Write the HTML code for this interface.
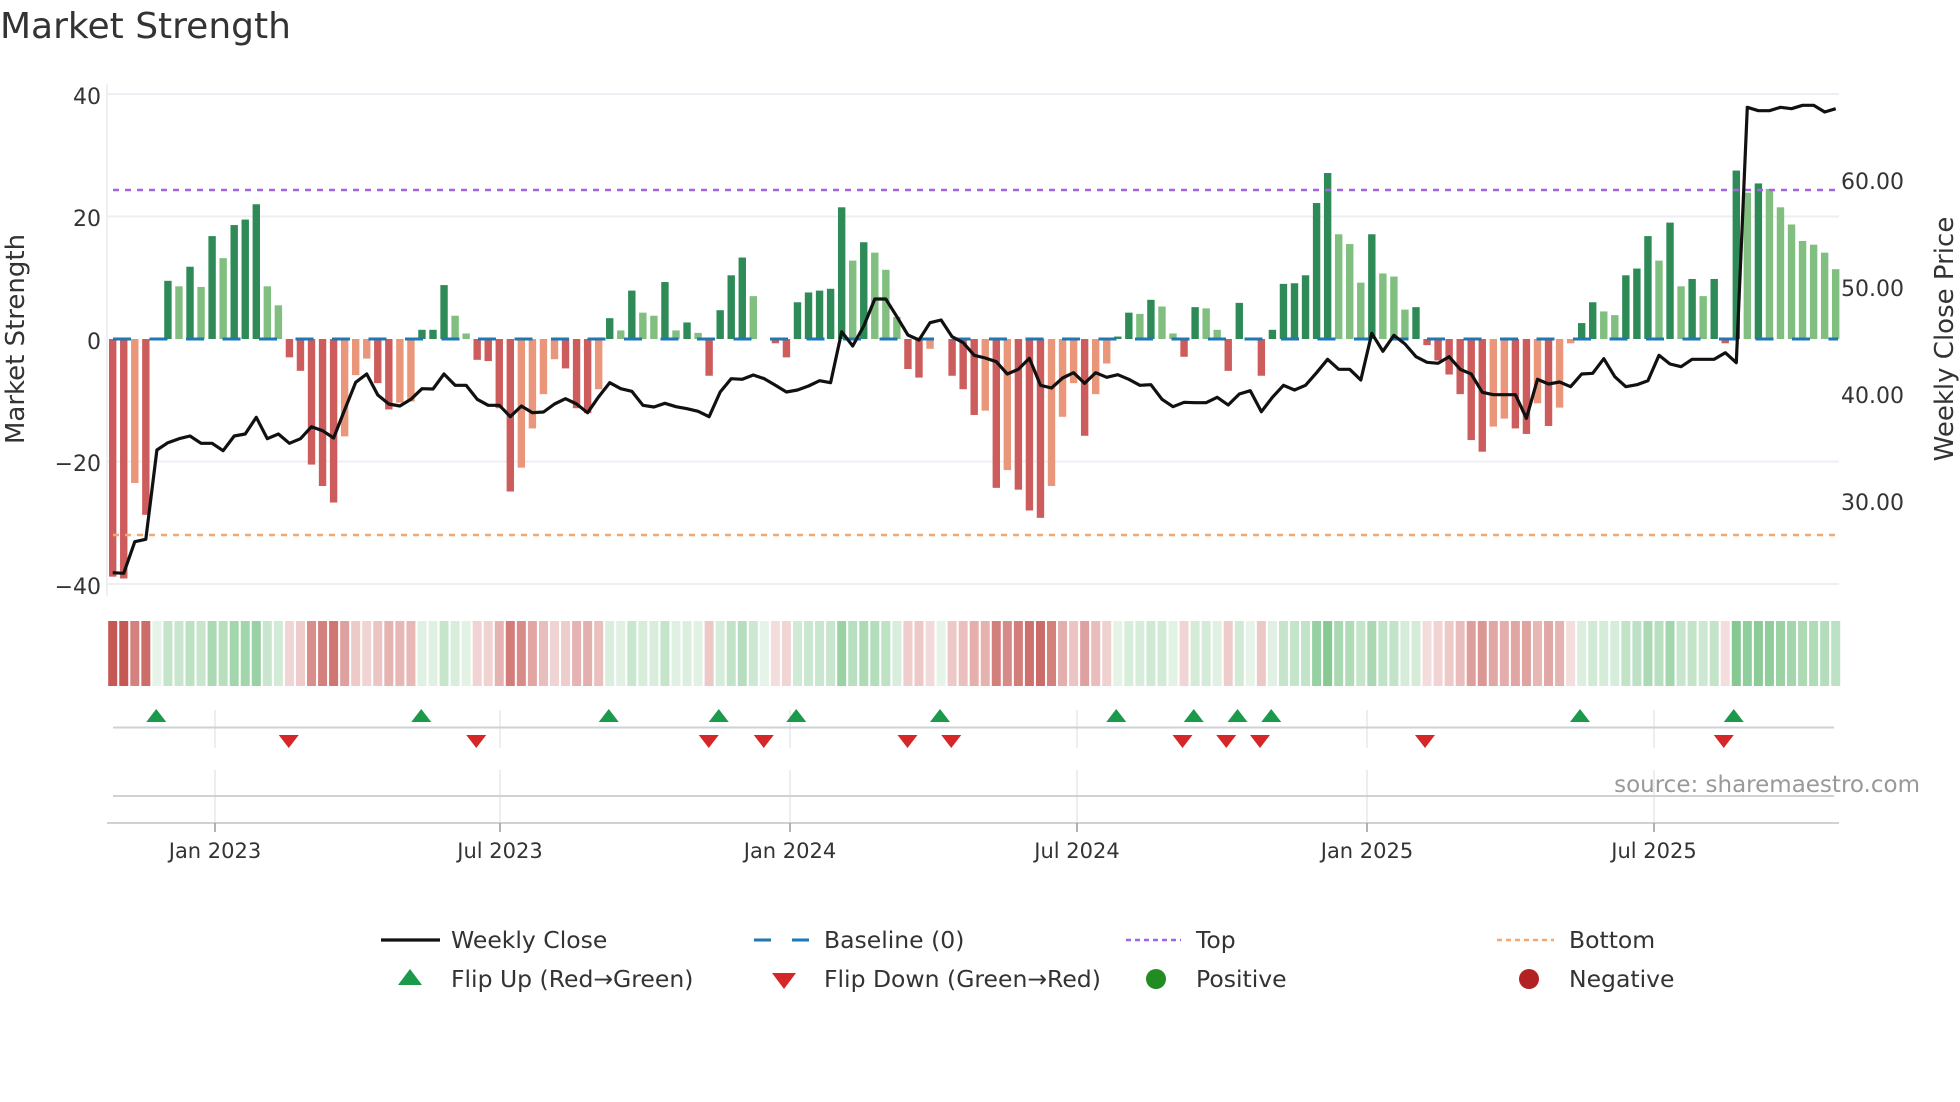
<!DOCTYPE html>
<html><head><meta charset="utf-8"><style>
html,body{margin:0;padding:0;background:#fff;}
svg{display:block;font-family:"DejaVu Sans","Liberation Sans",sans-serif;}
</style></head><body>
<svg id="c" width="1960" height="1102" viewBox="0 0 1960 1102" xmlns="http://www.w3.org/2000/svg">
<text x="0" y="38" font-size="36" fill="#333">Market Strength</text>
<g stroke="#eceff4" stroke-width="2">
<line x1="107" y1="94" x2="1839" y2="94"/><line x1="107" y1="216.5" x2="1839" y2="216.5"/>
<line x1="107" y1="461.5" x2="1839" y2="461.5"/><line x1="107" y1="584" x2="1839" y2="584"/>
<line x1="107" y1="84" x2="107" y2="596"/>
</g>
<g font-size="22" fill="#333" text-anchor="end">
<text x="101" y="104">40</text><text x="101" y="226">20</text><text x="101" y="349">0</text>
<text x="101" y="471">−20</text><text x="101" y="594">−40</text>
</g>
<g font-size="22" fill="#333">
<text x="1841" y="189">60.00</text><text x="1841" y="296">50.00</text>
<text x="1841" y="403">40.00</text><text x="1841" y="510">30.00</text>
</g>
<text transform="translate(24,339) rotate(-90)" font-size="26" fill="#333" text-anchor="middle">Market Strength</text>
<text transform="translate(1953,339) rotate(-90)" font-size="26" fill="#333" text-anchor="middle">Weekly Close Price</text>
<g id="bars"></g>
<line x1="113" y1="339" x2="1838" y2="339" stroke="#1f77b4" stroke-width="3" stroke-dasharray="18 18.5"/>
<line x1="113" y1="190" x2="1838" y2="190" stroke="#a463e0" stroke-width="2.5" stroke-dasharray="6 6"/>
<line x1="113" y1="535" x2="1838" y2="535" stroke="#f2a870" stroke-width="2.5" stroke-dasharray="6 6"/>
<polyline id="line" fill="none" stroke="#111" stroke-width="3.2" stroke-linejoin="round"/>
<g id="strip"></g>
<g stroke="#e6e8ec" stroke-width="1.5">
<line x1="215" y1="710" x2="215" y2="748"/><line x1="500" y1="710" x2="500" y2="748"/><line x1="790" y1="710" x2="790" y2="748"/><line x1="1077" y1="710" x2="1077" y2="748"/><line x1="1367" y1="710" x2="1367" y2="748"/><line x1="1654" y1="710" x2="1654" y2="748"/>
<line x1="215" y1="770" x2="215" y2="822"/><line x1="500" y1="770" x2="500" y2="822"/><line x1="790" y1="770" x2="790" y2="822"/><line x1="1077" y1="770" x2="1077" y2="822"/><line x1="1367" y1="770" x2="1367" y2="822"/><line x1="1654" y1="770" x2="1654" y2="822"/>
</g>
<line x1="113" y1="727.5" x2="1834" y2="727.5" stroke="#cfd1d4" stroke-width="2"/>
<line x1="113" y1="796" x2="1834" y2="796" stroke="#cfd1d4" stroke-width="2"/>
<line x1="107" y1="823" x2="1839" y2="823" stroke="#cfd1d4" stroke-width="2"/>
<g stroke="#999" stroke-width="1.5">
<line x1="215" y1="823" x2="215" y2="832"/><line x1="500" y1="823" x2="500" y2="832"/><line x1="790" y1="823" x2="790" y2="832"/><line x1="1077" y1="823" x2="1077" y2="832"/><line x1="1367" y1="823" x2="1367" y2="832"/><line x1="1654" y1="823" x2="1654" y2="832"/>
</g>
<g id="flips"></g>
<g font-size="21" fill="#333" text-anchor="middle">
<text x="215" y="858">Jan 2023</text><text x="500" y="858">Jul 2023</text><text x="790" y="858">Jan 2024</text>
<text x="1077" y="858">Jul 2024</text><text x="1367" y="858">Jan 2025</text><text x="1654" y="858">Jul 2025</text>
</g>
<text x="1920" y="792" font-size="23" fill="#999" text-anchor="end">source: sharemaestro.com</text>
<g font-size="23.5" fill="#333">
<line x1="381" y1="940" x2="440" y2="940" stroke="#111" stroke-width="3.2"/>
<text x="451" y="948">Weekly Close</text>
<line x1="754" y1="940" x2="809" y2="940" stroke="#1f77b4" stroke-width="3" stroke-dasharray="17 21"/>
<text x="824" y="948">Baseline (0)</text>
<line x1="1126" y1="940" x2="1181" y2="940" stroke="#a463e0" stroke-width="2.5" stroke-dasharray="5 4"/>
<text x="1196" y="948">Top</text>
<line x1="1497" y1="940" x2="1554" y2="940" stroke="#f2a870" stroke-width="2.5" stroke-dasharray="5 4"/>
<text x="1569" y="948">Bottom</text>
<polygon points="410,969 422,985 398,985" fill="#1a9a4a"/>
<text x="451" y="987">Flip Up (Red→Green)</text>
<polygon points="772,973 796,973 784,989" fill="#d62728"/>
<text x="824" y="987">Flip Down (Green→Red)</text>
<circle cx="1156" cy="979" r="10" fill="#228b22"/>
<text x="1196" y="987">Positive</text>
<circle cx="1529" cy="979" r="10" fill="#b22222"/>
<text x="1569" y="987">Negative</text>
</g>
</svg>
<script>
var V=[-38.8,-39.1,-23.5,-28.7,0,9.5,8.6,11.8,8.5,16.8,13.2,18.6,19.5,22,8.6,5.5,-3,-5.2,-20.5,-24,-26.7,-15.9,-5.9,-3.2,-7.2,-11.5,-10.4,-10.2,1.5,1.5,8.8,3.8,0.9,-3.4,-3.6,-11.3,-24.9,-21,-14.6,
-9,-3.3,-4.8,-11.3,-12.1,-8.2,3.4,1.4,7.9,4.3,3.8,9.3,1.4,2.7,1,-6,4.7,10.4,13.3,7,0,-0.7,-3,6,7.6,7.9,8.2,21.5,12.8,15.8,14.1,11.3,3.6,-4.9,-6.3,-1.6,0,-6,-8.2,-12.4,
-11.7,-24.3,-21.4,-24.6,-28,-29.2,-24,-12.7,-7.2,-15.8,-9,-4,0.4,4.3,4.1,6.4,5.3,0.9,-2.9,5.2,5,1.5,-5.2,5.9,0,-6,1.5,9,9.1,10.4,22.2,27.1,17.1,15.5,9.2,17.1,10.7,10.2,4.8,5.2,
-1,-3.5,-5.8,-9,-16.5,-18.4,-14.3,-13,-14.6,-15.5,-10.5,-14.2,-11.2,-0.7,2.6,6,4.5,3.9,10.4,11.5,16.8,12.8,19,8.6,9.8,7,9.8,-0.7,27.5,23.9,25.4,24.5,21.5,18.7,16,15.4,14.1,11.4];
var T="ddldd"+"DLDLDLDDDLL"+"ddddd"+"lll"+"dd"+"ll"+"DDD"+"LL"+"dddd"+"ll"
+"ll"+"ddd"+"l"+"DLDLLDLDL"+"d"+"DDDL"+"ddd"+"DDDDD"+"LDLLL"+"ddl"+"dddd"+"l"
+"dlddd"+"lll"+"d"+"ll"+"DDLDLL"+"d"+"DLL"+"d"+"D"+"d"+"d"+"DDDDDD"+"LLL"+"D"+"LLL"+"D"+"d"
+"ddddd"+"ll"+"dd"+"l"+"d"+"ll"+"DDLLDDDLDLDLD"+"d"+"DLDL"+"LLLLLL";
var L1=[1268,1270,1175,1168,900,878,866,858,880,880,902,858,852,802,866,852,880,866,830,842,864,780,697,672,735,762,768,748,716,717,672,706,706,748,766,766,800,768,788,786];
var L2=[788,762,746,762,788,740,698,716,724,766,771,760,770,776,784,800,726,686,688,675,686,706,726,720,708,692,698,545,588,528,447,447,500,555,570,518,510,560,578,616,624];
var L3=[620,635,672,658,625,706,714,684,668,700,668,682,674,688,706,704,748,770,757,758,758,742,765,732,722,785,742,706,720,706,668,628,658,658,690,550,604,556,582,620,637];
var L4=[820,800,838,852,907,914,914,914,985,868,882,876,890,852,850,806,860,890,884,872,796,822,830,808,808,808,788,818,52,62,62,52,56,46,46,66,56,48];
var ys=[];L1.forEach(function(y){ys.push(150+y/3)});
L2.slice(1).forEach(function(y){ys.push(150+y/3)});
L3.slice(1).forEach(function(y){ys.push(150+y/3)});
L4.forEach(function(y){ys.push(90+y/3)});
var NS="http://www.w3.org/2000/svg",step=(1835.7-112.7)/156;
function el(n,a,p){var e=document.createElementNS(NS,n);for(var k in a)e.setAttribute(k,a[k]);p.appendChild(e);}
var B=document.getElementById('bars'),S=document.getElementById('strip'),F=document.getElementById('flips');
var cols={D:"#2e8b57",L:"#80bf80",d:"#cd5c5c",l:"#e9967a"};
for(var i=0;i<V.length;i++){var v=V[i],x=112.7+i*step,t=T[i]||(v>=0?'L':'l');
 if(v!==0){var h=Math.abs(v)*6.125;el('rect',{x:x-3.7,y:v>0?339-h:339,width:7.4,height:h,fill:cols[t]},B);}
 var a=Math.min(1,0.18+0.82*Math.abs(v)/34),c;
 if(v>=0){c="rgb("+Math.round(255-a*(255-110))+","+Math.round(255-a*(255-190))+","+Math.round(255-a*(255-125))+")";}
 else{c="rgb("+Math.round(255-a*(255-198))+","+Math.round(255-a*(255-88))+","+Math.round(255-a*(255-84))+")";}
 el('rect',{x:x-4.5,y:621,width:9,height:65,fill:c},S);
}
var pts=[];for(var j=0;j<ys.length&&j<V.length;j++){pts.push((112.7+j*step).toFixed(1)+","+ys[j].toFixed(1));}
document.getElementById('line').setAttribute('points',pts.join(' '));
[125,337,487,575,637,752,893,955,990,1017,1264,1387].forEach(function(x){x*=1.25;el('polygon',{points:x+",709 "+(x+10)+",722 "+(x-10)+",722",fill:"#1a9a4a"},F);});
[231,381,567,611,726,761,946,981,1008,1140,1379].forEach(function(x){x*=1.25;el('polygon',{points:(x-10)+",735 "+(x+10)+",735 "+x+",748",fill:"#d62728"},F);});
</script>
</body></html>
